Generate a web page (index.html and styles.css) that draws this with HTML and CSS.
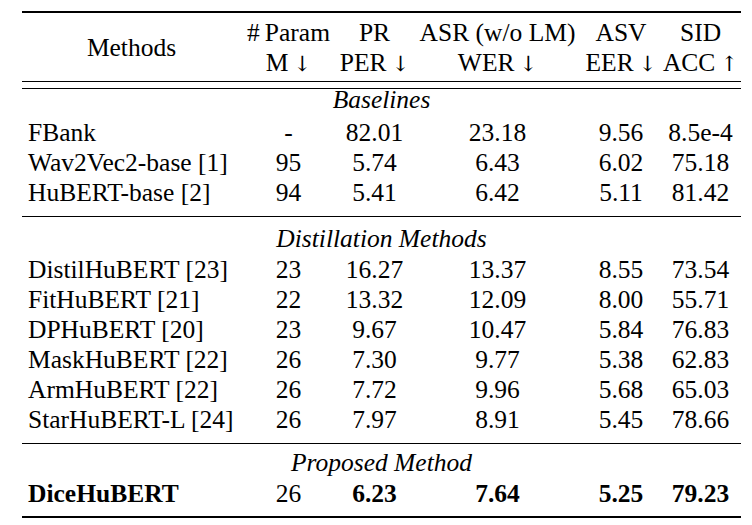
FILE: index.html
```html
<!DOCTYPE html>
<html lang="en">
<head>
<meta charset="utf-8">
<title>Results table</title>
<link rel="stylesheet" href="styles.css">
</head>
<body>
<div class="table">
  <div class="hcell methods">Methods</div>
  <div class="hcell r1">#&#8201;Param</div>
  <div class="hcell r1">PR</div>
  <div class="hcell r1">ASR (w/o LM)</div>
  <div class="hcell r1">ASV</div>
  <div class="hcell r1">SID</div>
  <div class="hcell r2">M&#8201;<span class="arr">↓</span></div>
  <div class="hcell r2">PER&#8201;<span class="arr">↓</span></div>
  <div class="hcell r2">WER&#8201;<span class="arr">↓</span></div>
  <div class="hcell r2">EER&#8201;<span class="arr">↓</span></div>
  <div class="hcell r2">ACC&#8201;<span class="arr">↑</span></div>

  <div class="rule dbl1"></div>
  <div class="rule dbl2"></div>

  <div class="section first">Baselines</div>
  <div class="name">FBank</div><div class="num">-</div><div class="num">82.01</div><div class="num">23.18</div><div class="num">9.56</div><div class="num">8.5e-4</div>
  <div class="name">Wav2Vec2-base [1]</div><div class="num">95</div><div class="num">5.74</div><div class="num">6.43</div><div class="num">6.02</div><div class="num">75.18</div>
  <div class="name">HuBERT-base [2]</div><div class="num">94</div><div class="num">5.41</div><div class="num">6.42</div><div class="num">5.11</div><div class="num">81.42</div>

  <div class="rule mid"></div>

  <div class="section distill">Distillation Methods</div>
  <div class="name">DistilHuBERT [23]</div><div class="num">23</div><div class="num">16.27</div><div class="num">13.37</div><div class="num">8.55</div><div class="num">73.54</div>
  <div class="name">FitHuBERT [21]</div><div class="num">22</div><div class="num">13.32</div><div class="num">12.09</div><div class="num">8.00</div><div class="num">55.71</div>
  <div class="name">DPHuBERT [20]</div><div class="num">23</div><div class="num">9.67</div><div class="num">10.47</div><div class="num">5.84</div><div class="num">76.83</div>
  <div class="name">MaskHuBERT [22]</div><div class="num">26</div><div class="num">7.30</div><div class="num">9.77</div><div class="num">5.38</div><div class="num">62.83</div>
  <div class="name">ArmHuBERT [22]</div><div class="num">26</div><div class="num">7.72</div><div class="num">9.96</div><div class="num">5.68</div><div class="num">65.03</div>
  <div class="name">StarHuBERT-L [24]</div><div class="num">26</div><div class="num">7.97</div><div class="num">8.91</div><div class="num">5.45</div><div class="num">78.66</div>

  <div class="rule mid"></div>

  <div class="section proposed">Proposed Method</div>
  <div class="name bold">DiceHuBERT</div><div class="num">26</div><div class="num bold">6.23</div><div class="num bold">7.64</div><div class="num bold">5.25</div><div class="num bold">79.23</div>
</div>
</body>
</html>
```

FILE: styles.css
```css
html, body {
  margin: 0;
  padding: 0;
  background: #ffffff;
}

body {
  font-family: "Liberation Serif", "Times New Roman", serif;
  font-size: 25.5px;
  color: #000000;
}

.table {
  display: grid;
  grid-template-columns: 219px 95px 77px 169px 78px 81px;
  width: 719px;
  margin: 11px 0 0 22px;
  padding: 5px 0 7px;
  border-top: 2px solid #000000;
  border-bottom: 2px solid #000000;
}

.rule {
  grid-column: 1 / -1;
  height: 1px;
  background: #000000;
}

.rule.dbl1 {
  margin-top: 3px;
}

.rule.dbl2 {
  margin-top: 6px;
}

.rule.mid {
  margin-top: 8px;
}

.hcell {
  height: 30px;
  line-height: 30px;
  text-align: center;
  white-space: nowrap;
}

.hcell.methods {
  grid-row: span 2;
  height: auto;
  align-self: center;
}

.arr {
  font-family: "DejaVu Serif", "Liberation Serif", serif;
  font-size: 21px;
  line-height: 0;
}

.section {
  grid-column: 1 / -1;
  height: 20px;
  text-align: center;
  font-style: italic;
  line-height: 20px;
}

.section.first {
  margin: 1px 0 8px;
}

.section.distill {
  margin: 12px 0 6px;
}

.section.proposed {
  margin: 9px 0 6px;
}

.name {
  height: 30px;
  line-height: 30px;
  padding-left: 6px;
  white-space: nowrap;
}

.num {
  height: 30px;
  line-height: 30px;
  text-align: center;
  white-space: nowrap;
}

.bold {
  font-weight: bold;
}
```
